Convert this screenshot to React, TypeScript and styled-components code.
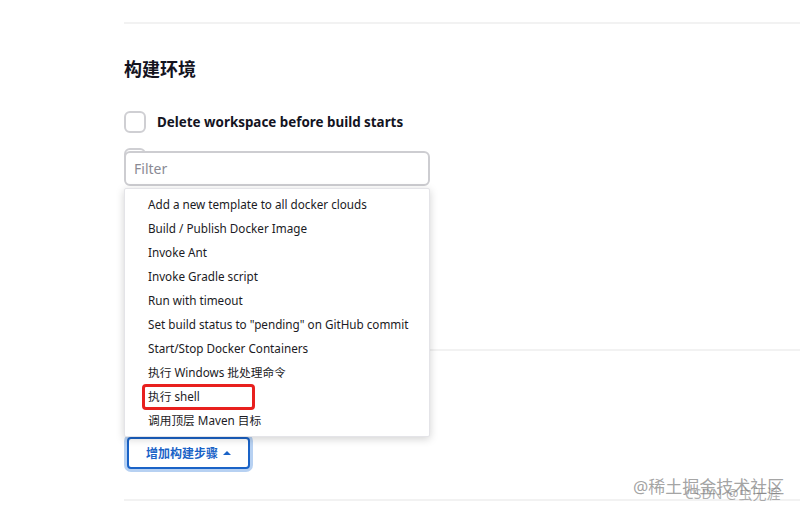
import React from "react";
import styled, { createGlobalStyle } from "styled-components";

const Global = createGlobalStyle`
  html, body { margin: 0; padding: 0; background: #fff; }
  body { font-family: "Noto Sans", "Noto Sans CJK SC", sans-serif; color: #14141f; }
  * { box-sizing: border-box; }
`;

const Page = styled.div`
  position: relative;
  width: 800px;
  height: 512px;
  overflow: hidden;
  padding-left: 124px;
  padding-top: 22px;
`;

const Divider = styled.div<{ $mt: number }>`
  height: 2px;
  background: #f2f2f2;
  margin-top: ${(p) => p.$mt}px;
`;

const Heading = styled.h2`
  margin: 33px 0 0;
  font-size: 18px;
  line-height: 24px;
  font-weight: 700;
  color: #14141f;
`;

const Row = styled.label`
  display: flex;
  align-items: center;
  gap: 11px;
  height: 22px;
  margin-top: 30px;
`;

const HiddenRow = styled.div`
  display: flex;
  align-items: center;
  height: 22px;
  margin-top: 15px;
`;

const Box = styled.span`
  width: 22px;
  height: 22px;
  border: 2px solid #cfcfd3;
  border-radius: 6px;
  background: #fff;
  flex: none;
`;

const Circle = styled.span`
  width: 16px;
  height: 16px;
  border-radius: 50%;
  background: #e8e8ec;
  margin-left: 199px;
`;

const Label = styled.span`
  font-size: 13.4px;
  font-weight: 700;
  color: #14141f;
`;

const ButtonArea = styled.div`
  padding: 86px 0 0 3px;
`;

const AddButton = styled.button`
  display: inline-flex;
  align-items: center;
  gap: 5px;
  height: 32px;
  padding: 0 17px 0 17px;
  border: 2px solid #1a63c7;
  border-radius: 4px;
  background: #fff;
  color: #1a63c7;
  font-family: "Noto Sans", "Noto Sans CJK SC", sans-serif;
  font-size: 12px;
  font-weight: 700;
  box-shadow: 0 0 0 3px #b7d1f2;
`;

const Caret = styled.span`
  width: 0;
  height: 0;
  border-left: 4px solid transparent;
  border-right: 4px solid transparent;
  border-bottom: 4px solid #1a63c7;
`;

const Popup = styled.div`
  position: absolute;
  left: 124px;
  top: 151px;
  width: 306px;
  display: flex;
  flex-direction: column;
  gap: 2px;
`;

const Filter = styled.div`
  height: 35px;
  border: 2px solid #cdcdd1;
  border-radius: 6px;
  background: #fff;
  display: flex;
  align-items: center;
  padding-left: 8px;
  font-size: 14px;
  color: #8a8a94;
`;

const Menu = styled.ul`
  list-style: none;
  margin: 0;
  padding: 3px 0 4px;
  background: #fff;
  border: 1px solid #e4e4e8;
  border-radius: 2px;
  box-shadow: 0 2px 8px rgba(0, 0, 0, 0.18);
`;

const Item = styled.li`
  position: relative;
  height: 24px;
  line-height: 24px;
  padding-left: 23px;
  font-size: 11.7px;
  color: #1b1b24;
  white-space: nowrap;
`;

const Mark = styled.span`
  position: absolute;
  left: 17px;
  top: 0;
  width: 113px;
  height: 26px;
  border: 3px solid #e8201e;
  border-radius: 4px;
`;

const Watermark = styled.div<{ $x: number; $y: number; $size: number; $tone: string }>`
  position: absolute;
  left: ${(p) => p.$x}px;
  top: ${(p) => p.$y}px;
  font-size: ${(p) => p.$size}px;
  line-height: 1;
  color: ${(p) => p.$tone};
  white-space: nowrap;
`;

const items = [
  "Add a new template to all docker clouds",
  "Build / Publish Docker Image",
  "Invoke Ant",
  "Invoke Gradle script",
  "Run with timeout",
  'Set build status to "pending" on GitHub commit',
  "Start/Stop Docker Containers",
  "执行 Windows 批处理命令",
  "执行 shell",
  "调用顶层 Maven 目标",
];

export default function App() {
  return (
    <>
      <Global />
      <Page>
        <Divider $mt={0} />
        <Heading>构建环境</Heading>
        <Row>
          <Box />
          <Label>Delete workspace before build starts</Label>
        </Row>
        <HiddenRow>
          <Box />
          <Circle />
        </HiddenRow>
        <Divider $mt={179} />
        <ButtonArea>
          <AddButton>
            增加构建步骤
            <Caret />
          </AddButton>
        </ButtonArea>
        <Divider $mt={30} />
        <Popup>
          <Filter>Filter</Filter>
          <Menu>
            {items.map((t) => (
              <Item key={t}>
                {t}
                {t === "执行 shell" && <Mark />}
              </Item>
            ))}
          </Menu>
        </Popup>
        <Watermark $x={633} $y={478} $size={17} $tone="rgba(140,140,140,0.8)">@稀土掘金技术社区</Watermark>
        <Watermark $x={685} $y={487} $size={14} $tone="rgba(120,120,120,0.6)">CSDN @虫无涯</Watermark>
      </Page>
    </>
  );
}
